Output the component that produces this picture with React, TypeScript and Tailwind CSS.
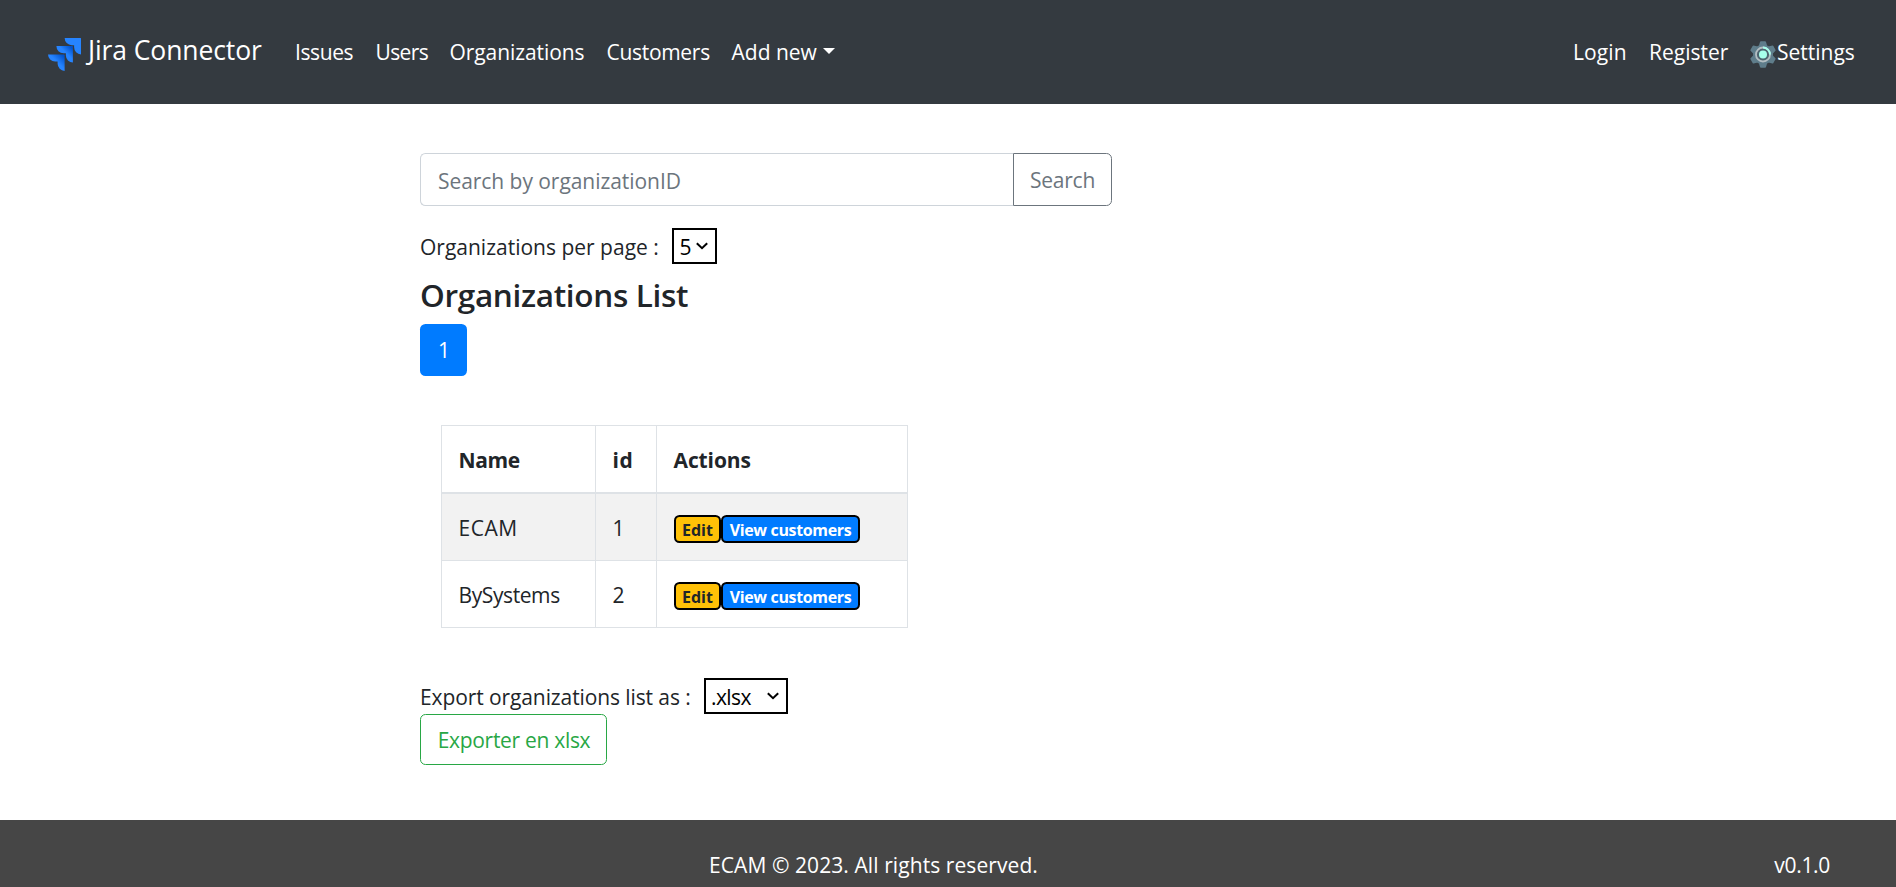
import type { ReactNode } from "react";

function JiraLogo() {
  return (
    <svg viewBox="0 0 24 24" className="mt-[7px] h-[33px] w-[33px] shrink-0">
      <defs>
        <linearGradient id="mid" x1="98%" y1="0%" x2="58%" y2="41%">
          <stop offset="0.18" stopColor="#0052CC" />
          <stop offset="1" stopColor="#2684FF" />
        </linearGradient>
        <linearGradient id="low" x1="100%" y1="0%" x2="55%" y2="45%">
          <stop offset="0.18" stopColor="#0052CC" />
          <stop offset="1" stopColor="#2684FF" />
        </linearGradient>
      </defs>
      <path fill="#2684FF" d="M23.4 0H12.1a5.2 5.2 0 0 0 5.2 5.2h1.7v1.6A5.2 5.2 0 0 0 24 12V.5a.5.5 0 0 0-.6-.5Z" />
      <path fill="url(#mid)" d="M17.6 5.9H6.1a5.2 5.2 0 0 0 5.2 5.2H13v1.7a5.2 5.2 0 0 0 5.1 5.1V6.5a.5.5 0 0 0-.5-.6Z" />
      <path fill="url(#low)" d="M11.6 12H0a5.2 5.2 0 0 0 5.2 5.1H7v1.7A5.2 5.2 0 0 0 12.1 24V12.5a.5.5 0 0 0-.5-.5Z" />
    </svg>
  );
}

const teeth = [0, 60, 120, 180, 240, 300];

function Gear() {
  return (
    <svg viewBox="0 0 26 27" className="mt-1 h-[27px] w-[26px] shrink-0">
      <g fill="#5f7d8b">
        {teeth.map((a) => (
          <path key={a} transform={`rotate(${a} 13 13.5)`} d="M8.5 6 10 .9Q10.2.3 10.9.3H15.1Q15.8.3 16 .9L17.5 6Z" />
        ))}
        <circle cx="13" cy="13.5" r="10" />
      </g>
      <circle cx="13" cy="13.5" r="7" fill="#4d6570" stroke="#b4bec3" strokeWidth="1.8" />
      <path d="M13 6.5a7 7 0 0 1 7 7" fill="none" stroke="#a7ffeb" strokeWidth="1.8" />
      <circle cx="13" cy="13.5" r="4" fill="#a7ffeb" />
    </svg>
  );
}

function Chevron() {
  return (
    <svg viewBox="0 0 12 8" className="h-2 w-3 shrink-0" fill="none" stroke="#000" strokeWidth="2">
      <path d="M.8 1.2 6 6.2 11.2 1.2" />
    </svg>
  );
}

function NavLink({ className, children }: { className: string; children: ReactNode }) {
  return (
    <a href="#" className={`whitespace-nowrap ${className}`}>
      {children}
    </a>
  );
}

const organizations = [
  { name: "ECAM", id: 1, spacing: "tracking-[0.5px]" },
  { name: "BySystems", id: 2, spacing: "tracking-[-0.4px]" },
];

const cell = "border border-[#dee2e6] pb-0 pl-[16.5px] pr-4 text-left";

export default function App() {
  return (
    <div className="flex h-[887px] w-full flex-col overflow-hidden bg-white font-['Open_Sans','Liberation_Sans',sans-serif] text-[21px] leading-[33px] text-[#212529]">
      <nav className="flex h-[104px] shrink-0 items-center bg-[#343a40] pr-10 pl-12 text-white">
        <a href="#" className="flex w-[247px] items-center pb-[3px]">
          <JiraLogo />
          <span className="pl-[7px] text-[26.5px] leading-[41px] tracking-[-0.1px] whitespace-nowrap">Jira Connector</span>
        </a>
        <div className="flex gap-[22px]">
          <NavLink className="w-[58.5px] tracking-[-0.4px]">Issues</NavLink>
          <NavLink className="w-[52px] tracking-[-0.6px]">Users</NavLink>
          <NavLink className="w-[135px] tracking-[-0.08px]">Organizations</NavLink>
          <NavLink className="w-[103px] tracking-[-0.3px]">Customers</NavLink>
          <NavLink className="flex items-center">
            <span>Add new</span>
            <span className="mb-[2px] ml-[6px] border-x-[6.5px] border-t-[6.5px] border-x-transparent border-t-white" />
          </NavLink>
        </div>
        <div className="ml-auto flex items-center gap-[22px]">
          <NavLink className="w-[54px] tracking-[0.1px]">Login</NavLink>
          <NavLink className="w-[79px]">Register</NavLink>
          <NavLink className="flex w-[106px] items-center gap-px">
            <Gear />
            <span>Settings</span>
          </NavLink>
        </div>
      </nav>

      <main className="flex h-[716px] shrink-0 flex-col items-start pt-[49px] pl-[420px]">
        <form className="flex h-[53px] w-[692px]">
          <input
            type="text"
            placeholder="Search by organizationID"
            className="w-[593px] rounded-l-[5.5px] border border-r-0 border-[#ced4da] pt-1 pl-[17px] tracking-[-0.05px] outline-none placeholder:text-[#6c757d] placeholder:opacity-100"
          />
          <button type="button" className="w-[99px] rounded-r-[5.5px] border border-[#6c757d] pt-[2px] tracking-[-0.22px] text-[#6c757d]">
            Search
          </button>
        </form>

        <div className="mt-[22px] flex h-9 items-center">
          <span className="w-[252px] pt-[2px] whitespace-nowrap">Organizations per page :</span>
          <button type="button" className="flex h-9 w-[45px] items-center justify-between border-2 border-black pr-[7px] pl-[5.5px] text-black">
            <span className="pt-[2px]">5</span>
            <Chevron />
          </button>
        </div>

        <h3 className="mt-[11px] text-[31.5px] leading-[39px] font-[550] tracking-[-0.32px]">Organizations List</h3>

        <button type="button" className="mt-[10px] h-[52px] w-[47px] rounded-[5.5px] bg-[#007bff] pl-px text-white">
          1
        </button>

        <table className="mt-[49px] ml-[21px] w-[466px] table-fixed border-collapse border border-[#dee2e6]">
          <colgroup>
            <col className="w-[154px]" />
            <col className="w-[61px]" />
            <col className="w-[251px]" />
          </colgroup>
          <thead>
            <tr className="h-[67px] font-bold">
              <th className={`${cell} border-b-2 pt-1 tracking-[-0.4px]`}>Name</th>
              <th className={`${cell} border-b-2 pt-1 tracking-[0.5px]`}>id</th>
              <th className={`${cell} border-b-2 pt-1 tracking-[-0.1px]`}>Actions</th>
            </tr>
          </thead>
          <tbody>
            {organizations.map((org) => (
              <tr key={org.id} className="h-[67px] odd:h-[68px] odd:bg-[#f2f2f2]">
                <td className={`${cell} pt-[3px] ${org.spacing}`}>{org.name}</td>
                <td className={`${cell} pt-[3px]`}>{org.id}</td>
                <td className={`${cell} pt-[2px]`}>
                  <div className="flex pt-[2px] text-base leading-6 font-bold">
                    <button type="button" className="h-7 w-[47px] rounded-[5.5px] border-2 border-black bg-[#ffc107] pt-px pl-px">
                      Edit
                    </button>
                    <button type="button" className="h-7 w-[139px] rounded-[5.5px] border-2 border-black bg-[#007bff] pt-px pl-px tracking-[-0.35px] whitespace-nowrap text-white">
                      View customers
                    </button>
                  </div>
                </td>
              </tr>
            ))}
          </tbody>
        </table>

        <div className="mt-[50px] flex h-9 items-center">
          <span className="w-[284px] pt-[2px] tracking-[-0.1px] whitespace-nowrap">Export organizations list as :</span>
          <button type="button" className="flex h-9 w-[84px] items-center justify-between border-2 border-black pr-[7px] pl-[5px] text-black">
            <span className="pt-[2px] tracking-[-0.6px]">.xlsx</span>
            <Chevron />
          </button>
        </div>
        <button type="button" className="h-[51px] w-[187px] rounded-[5.5px] border border-[#28a745] pt-[2px] pl-px tracking-[-0.3px] text-[#28a745]">
          Exporter en xlsx
        </button>
      </main>

      <footer className="flex grow items-start bg-[#464646] pt-[29px] pl-[709px] text-white">
        <span className="tracking-[0.08px] whitespace-nowrap">ECAM © 2023. All rights reserved.</span>
        <span className="mr-[66px] ml-auto tracking-[-0.31px]">v0.1.0</span>
      </footer>
    </div>
  );
}
